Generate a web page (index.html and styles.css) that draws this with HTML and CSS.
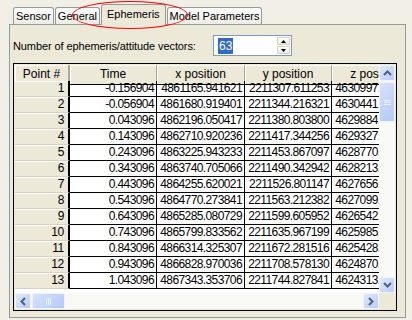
FILE: index.html
```html
<!DOCTYPE html>
<html lang="en">
<head>
    <meta charset="UTF-8">
    <title>Ephemeris</title>
    <link rel="stylesheet" href="styles.css">
</head>
<body>
    <div class="dialog">
        <div class="tabs">
            <div class="tab">Sensor</div>
            <div class="tab">General</div>
            <div class="tab active">Ephemeris</div>
            <div class="tab">Model Parameters</div>
        </div>
        <div class="mark"></div>

        <div class="panel">
            <div class="count-row">
                <label class="count-label">Number of ephemeris/attitude vectors:</label>
                <div class="spin">
                    <div class="spin-value"><span class="sel">63</span></div>
                    <div class="spin-buttons">
                        <div class="spin-btn">
                            <svg width="5" height="3" viewBox="0 0 5 3"><path d="M0 3h5L2.5 0z" fill="#000"/></svg>
                        </div>
                        <div class="spin-btn">
                            <svg width="5" height="3" viewBox="0 0 5 3"><path d="M0 0h5L2.5 3z" fill="#000"/></svg>
                        </div>
                    </div>
                </div>
            </div>

            <!-- Ephemeris grid -->
            <div class="grid-box">
                <div class="view">
                    <div class="sheet" id="sheet">
                        <div class="head corner-head">Point #</div>
                        <div class="head">Time</div>
                        <div class="head">x position</div>
                        <div class="head">y position</div>
                        <div class="head">z position</div>
                    </div>
                </div>
                <div class="vscroll">
                    <div class="sb-btn">
                        <svg width="9" height="6" viewBox="0 0 9 6"><path d="M1 5l3.5-3.5L8 5" fill="none" stroke="#4D6185" stroke-width="2"/></svg>
                    </div>
                    <div class="thumb v-thumb">
                        <svg width="7" height="7" viewBox="0 0 7 7"><path d="M0 1.5h7M0 3.5h7M0 5.5h7" stroke="#EEF4FE" stroke-width="1"/></svg>
                    </div>
                    <div class="track"></div>
                    <div class="sb-btn">
                        <svg width="9" height="6" viewBox="0 0 9 6"><path d="M1 1l3.5 3.5L8 1" fill="none" stroke="#4D6185" stroke-width="2"/></svg>
                    </div>
                </div>
                <div class="hscroll">
                    <div class="sb-btn">
                        <svg width="6" height="9" viewBox="0 0 6 9"><path d="M5 1L1.5 4.5 5 8" fill="none" stroke="#4D6185" stroke-width="2"/></svg>
                    </div>
                    <div class="thumb h-thumb">
                        <svg width="7" height="7" viewBox="0 0 7 7"><path d="M1.5 0v7M3.5 0v7M5.5 0v7" stroke="#EEF4FE" stroke-width="1"/></svg>
                    </div>
                    <div class="track"></div>
                    <div class="sb-btn">
                        <svg width="6" height="9" viewBox="0 0 6 9"><path d="M1 1l3.5 3.5L1 8" fill="none" stroke="#4D6185" stroke-width="2"/></svg>
                    </div>
                </div>
                <div class="scroll-corner"></div>
            </div>
        </div>
    </div>

    <script>
        // time, x, y, z for the first visible vectors
        const vectors = [
            ['-0.156904', '4861165.941621', '2211307.611253', '4630997.284310'],
            ['-0.056904', '4861680.919401', '2211344.216321', '4630441.107562'],
            ['0.043096', '4862196.050417', '2211380.803800', '4629884.719043'],
            ['0.143096', '4862710.920236', '2211417.344256', '4629327.982615'],
            ['0.243096', '4863225.943233', '2211453.867097', '4628770.604128'],
            ['0.343096', '4863740.705066', '2211490.342942', '4628213.337906'],
            ['0.443096', '4864255.620021', '2211526.801147', '4627656.081274'],
            ['0.543096', '4864770.273841', '2211563.212382', '4627099.146603'],
            ['0.643096', '4865285.080729', '2211599.605952', '4626542.225847'],
            ['0.743096', '4865799.833562', '2211635.967199', '4625985.402691'],
            ['0.843096', '4866314.325307', '2211672.281516', '4625428.513379'],
            ['0.943096', '4866828.970036', '2211708.578130', '4624870.861042'],
            ['1.043096', '4867343.353706', '2211744.827841', '4624313.990215']
        ];

        const sheet = document.getElementById('sheet');
        vectors.forEach((row, i) => {
            const num = document.createElement('div');
            num.className = 'row-head';
            num.textContent = i + 1;
            sheet.appendChild(num);
            row.forEach(value => {
                const cell = document.createElement('div');
                cell.className = 'cell';
                cell.textContent = value;
                sheet.appendChild(cell);
            });
        });
    </script>
</body>
</html>
```

FILE: styles.css
```css
* {
    box-sizing: border-box;
}

body {
    margin: 0;
    width: 412px;
    height: 320px;
    overflow: hidden;
    background-color: #F1EFE6;
    font-family: "Liberation Sans", Arial, sans-serif;
    font-size: 11px;
    color: #000;
}

.dialog {
    position: relative;
    padding: 4px 6px 0 9px;
}

.tabs {
    display: flex;
    align-items: flex-end;
    gap: 1px;
    height: 20px;
    padding-left: 4px;
    position: relative;
    z-index: 1;
}

.tab {
    height: 17px;
    line-height: 16px;
    padding: 0 2px;
    border: 1px solid #919B9C;
    border-bottom: none;
    border-radius: 3px 3px 0 0;
    background: linear-gradient(#FFFFFF, #ECEBE4);
    white-space: nowrap;
}

.tab.active {
    height: 21px;
    line-height: 19px;
    margin-bottom: -1px;
    padding: 0 5px;
    background: #ECE9D8;
}

.mark {
    position: absolute;
    left: 72px;
    top: 1px;
    width: 116px;
    height: 28px;
    border: 1px solid #FF0000;
    border-radius: 50%;
    z-index: 2;
}

.panel {
    height: 294px;
    padding: 10px 7px 4px 3px;
    border: 1px solid #919B9C;
    background-color: #ECE9D8;
}

.count-row {
    display: flex;
    align-items: center;
    height: 21px;
}

.count-label {
    width: 200px;
    white-space: nowrap;
    letter-spacing: -0.1px;
}

.spin {
    display: flex;
    align-items: center;
    width: 79px;
    height: 21px;
    border: 1px solid #7F9DB9;
    background-color: #fff;
}

.spin-value {
    flex: 1;
    padding-left: 4px;
    font-size: 12px;
}

.sel {
    background-color: #316AC5;
    color: #fff;
    padding: 1px 1px;
}

.spin-buttons {
    display: flex;
    flex-direction: column;
    gap: 1px;
    margin-right: 1px;
}

.spin-btn {
    display: flex;
    align-items: center;
    justify-content: center;
    width: 13px;
    height: 8px;
    border: 1px solid #D5D3C8;
    border-radius: 1px;
    background: linear-gradient(#FFFFFF, #EAE8DE);
}

.grid-box {
    display: grid;
    grid-template-columns: 364px 16px;
    grid-template-rows: 228px 16px;
    width: 384px;
    margin-top: 7px;
    padding: 1px;
    border: 1px solid #000;
    background-color: #ECE9D8;
}

.view {
    overflow: hidden;
    background-color: #fff;
}

.sheet {
    display: grid;
    grid-template-columns: 55px 87px 88px 87px 88px;
    grid-auto-rows: 16px;
    width: 405px;
    font-size: 12px;
    letter-spacing: -0.6px;
}

.head {
    height: 20px;
    line-height: 19px;
    text-align: center;
    letter-spacing: 0;
    background-color: #ECE9D8;
    border-right: 1px solid #ACA899;
    border-bottom: 1px solid #000;
    box-shadow: inset 1px 1px 0 #fff;
    white-space: nowrap;
    overflow: hidden;
}

.corner-head {
    border-right: 2px solid #ACA899;
    border-bottom: 1px solid #ACA899;
}

.row-head {
    line-height: 15px;
    text-align: right;
    padding-right: 4px;
    letter-spacing: -0.3px;
    background-color: #ECE9D8;
    border-right: 2px solid #000;
    border-bottom: 1px solid #D6D2C2;
    box-shadow: inset 0 1px 0 #fff;
}

.cell {
    line-height: 15px;
    text-align: right;
    padding-right: 2px;
    border-right: 1px solid #000;
    border-bottom: 1px solid #000;
    white-space: nowrap;
    overflow: hidden;
}

.vscroll {
    display: flex;
    flex-direction: column;
    background-color: #F9F9F5;
}

.hscroll {
    display: flex;
    background-color: #F9F9F5;
}

.sb-btn {
    flex: none;
    display: flex;
    align-items: center;
    justify-content: center;
    width: 16px;
    height: 16px;
    border: 1px solid #EEF3FD;
    border-radius: 2px;
    background: linear-gradient(135deg, #E0E9FD, #B8CCF7);
}

.thumb {
    flex: none;
    display: flex;
    align-items: center;
    justify-content: center;
    border: 1px solid #EEF3FD;
    border-radius: 2px;
    background: linear-gradient(135deg, #D6E2FC, #B4C9F6);
}

.v-thumb {
    height: 40px;
    margin-top: 1px;
}

.h-thumb {
    width: 33px;
    margin-left: 1px;
}

.track {
    flex: 1;
}

.scroll-corner {
    background-color: #ECE9D8;
}
```
